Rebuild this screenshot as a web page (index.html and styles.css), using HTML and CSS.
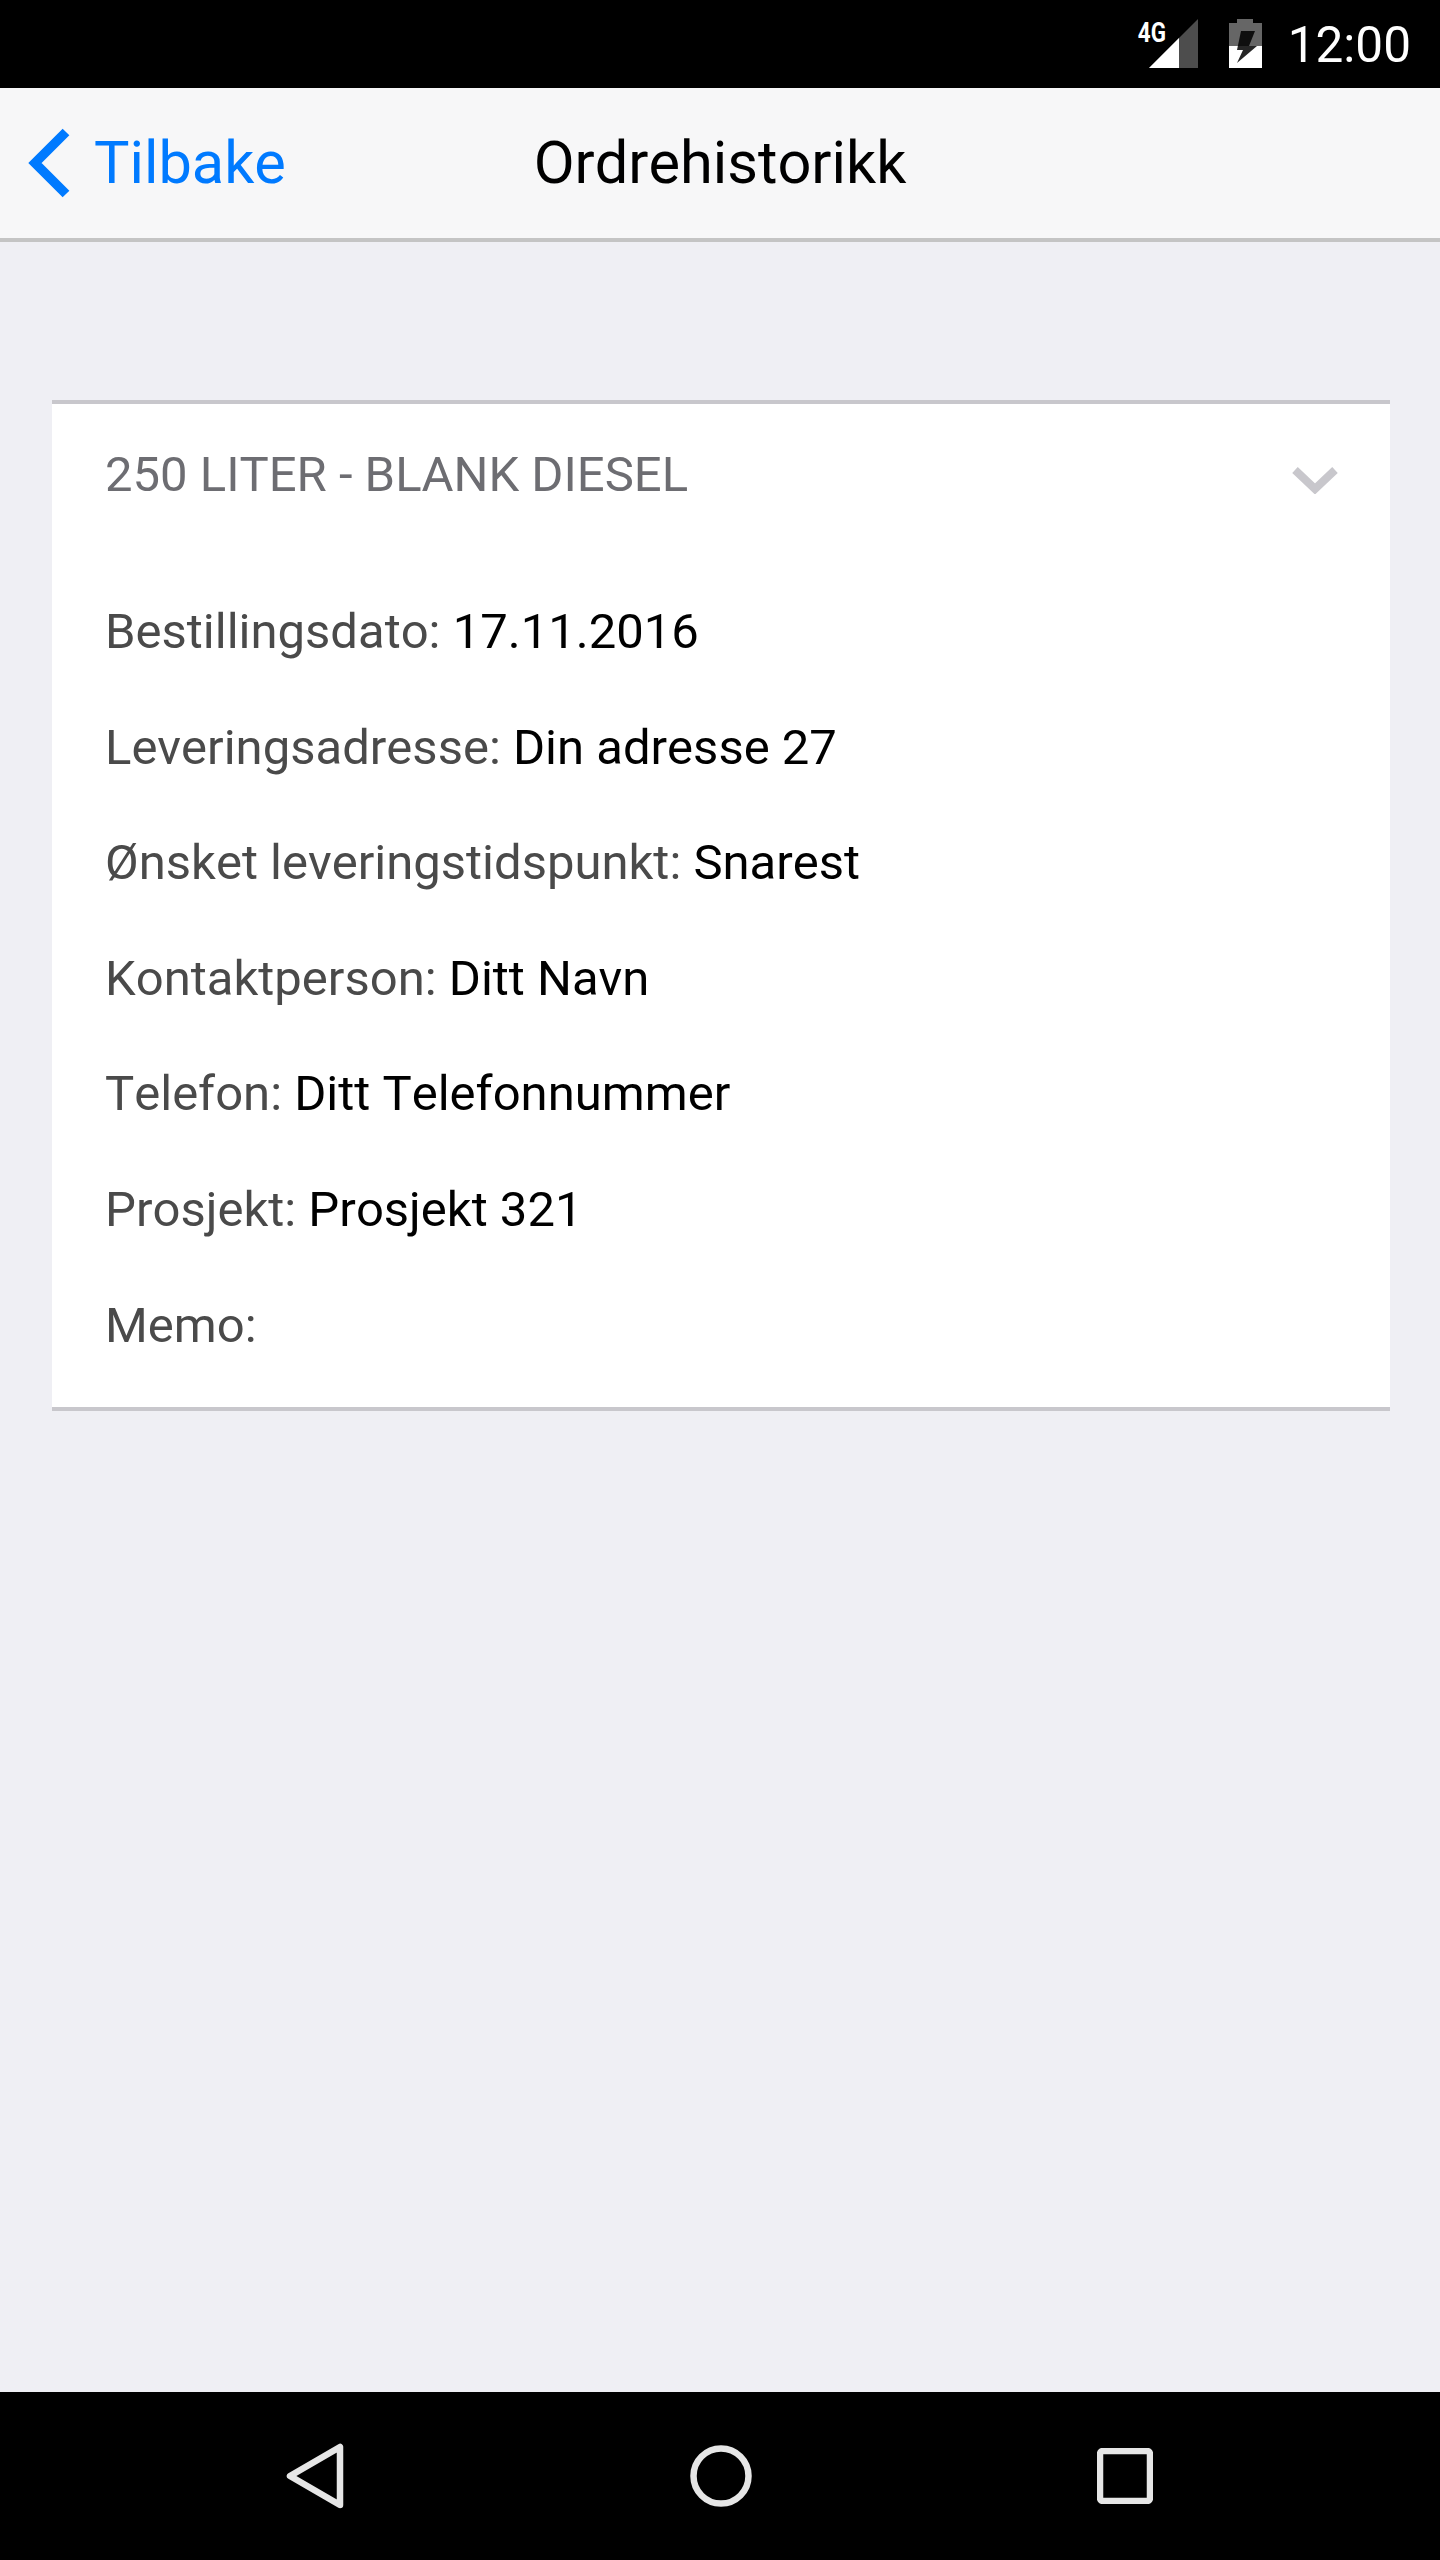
FILE: index.html
```html
<!DOCTYPE html>
<html lang="en">
<head>
  <meta charset="UTF-8">
  <title>Ordrehistorikk</title>
  <link rel="stylesheet" href="styles.css">
</head>
<body>
  <div class="app">
    <!-- Android status bar -->
    <div class="status-bar">
      <svg class="signal-icon" width="68" height="68" viewBox="-6 -18 68 68">
        <path d="M61 0V49H12Z" fill="#fff" fill-opacity="0.3"/>
        <path d="M42 19V49H12Z" fill="#fff"/>
        <text x="1" y="23" class="signal-text">4G</text>
      </svg>
      <svg class="battery-icon" width="33" height="50" viewBox="0 0 33 50">
        <path d="M8 0H24V4H33V49H0V4H8Z" fill="#fff" fill-opacity="0.4"/>
        <path d="M0 27H33V49H0Z" fill="#fff"/>
        <path d="M12 12H26L20 27H28L8 44L14 31H8Z" fill="#000" fill-opacity="0.85"/>
      </svg>
      <span class="clock">12:00</span>
    </div>

    <header class="top-bar">
      <a class="back-link">
        <svg width="42" height="70" viewBox="0 0 42 70">
          <path d="M38 4L7 35L38 66" fill="none" stroke="#007aff" stroke-width="9.5"/>
        </svg>
        <span>Tilbake</span>
      </a>
      <h1>Ordrehistorikk</h1>
    </header>

    <main class="content">
      <section class="order-card">
        <div class="order-head">
          <span>250 LITER - BLANK DIESEL</span>
          <svg width="46" height="30" viewBox="0 0 46 30">
            <path d="M3 6L23 25L43 6" fill="none" stroke="#c8c7cc" stroke-width="8"/>
          </svg>
        </div>
        <p class="order-row">Bestillingsdato: <b>17.11.2016</b></p>
        <p class="order-row">Leveringsadresse: <b>Din adresse 27</b></p>
        <p class="order-row">Ønsket leveringstidspunkt: <b>Snarest</b></p>
        <p class="order-row">Kontaktperson: <b>Ditt Navn</b></p>
        <p class="order-row">Telefon: <b>Ditt Telefonnummer</b></p>
        <p class="order-row">Prosjekt: <b>Prosjekt 321</b></p>
        <p class="order-row">Memo:</p>
      </section>
    </main>

    <!-- Android nav bar -->
    <nav class="nav-bar">
      <svg width="58" height="66" viewBox="0 0 58 66">
        <path d="M54 4V62L4 33Z" fill="none" stroke="#e6e6e6" stroke-width="6.5" stroke-linejoin="round"/>
      </svg>
      <svg width="62" height="62" viewBox="0 0 62 62">
        <circle cx="31" cy="31" r="27.5" fill="none" stroke="#e6e6e6" stroke-width="6.5"/>
      </svg>
      <svg width="56" height="56" viewBox="0 0 56 56">
        <rect x="3" y="3" width="50" height="50" rx="3" fill="none" stroke="#e6e6e6" stroke-width="6.5"/>
      </svg>
    </nav>
  </div>
</body>
</html>
```

FILE: styles.css
```css
body {
  margin: 0;
  font-family: 'Roboto', Arial, sans-serif;
  font-kerning: none;
  background: #000;
}
.app {
  height: 2560px;
  display: flex;
  flex-direction: column;
  background: #efeff4;
}
.status-bar {
  height: 88px;
  flex: none;
  background: #000;
  display: flex;
  align-items: flex-start;
  justify-content: flex-end;
  padding-right: 29px;
  color: #fff;
}
.signal-icon {
  margin-top: 1px;
  margin-right: 30px;
}
.signal-text {
  font-family: 'Roboto', Arial, sans-serif;
  font-size: 28px;
  font-weight: 700;
  fill: #fff;
  transform: scaleX(0.8);
}
.battery-icon {
  margin-top: 19px;
  margin-right: 26px;
}
.clock {
  font-size: 49.5px;
  line-height: 91px;
}
.top-bar {
  height: 150px;
  flex: none;
  background: #f7f7f8;
  border-bottom: 4px solid #c4c4c4;
  display: grid;
  grid-template-columns: 1fr auto 1fr;
  align-items: center;
}
.top-bar h1 {
  margin: 0;
  font-size: 59.5px;
  font-weight: 400;
  color: #000;
}
.back-link {
  display: flex;
  align-items: center;
  gap: 24px;
  padding-left: 28px;
  font-size: 59.5px;
  color: #007aff;
}
.content {
  flex: 1;
  padding: 158px 50px 0 52px;
}
.order-card {
  background: #fff;
  border-top: 4px solid #c8c7cc;
  border-bottom: 4px solid #c8c7cc;
  padding: 0 52px 0 53px;
  height: 1003px;
}
.order-head {
  height: 140px;
  margin-bottom: 30px;
  display: flex;
  justify-content: space-between;
  align-items: center;
  font-size: 49px;
  color: #6d6d72;
}
.order-head svg {
  margin-top: 9px;
}
.order-row {
  margin: 0;
  height: 115.6px;
  line-height: 115.6px;
  font-size: 49px;
  color: #4a4a4a;
}
.order-row b {
  font-weight: 400;
  color: #000;
}
.nav-bar {
  height: 168px;
  flex: none;
  background: #000;
  display: flex;
  align-items: center;
  justify-content: space-between;
  padding: 0 287px 0 286px;
}
```
